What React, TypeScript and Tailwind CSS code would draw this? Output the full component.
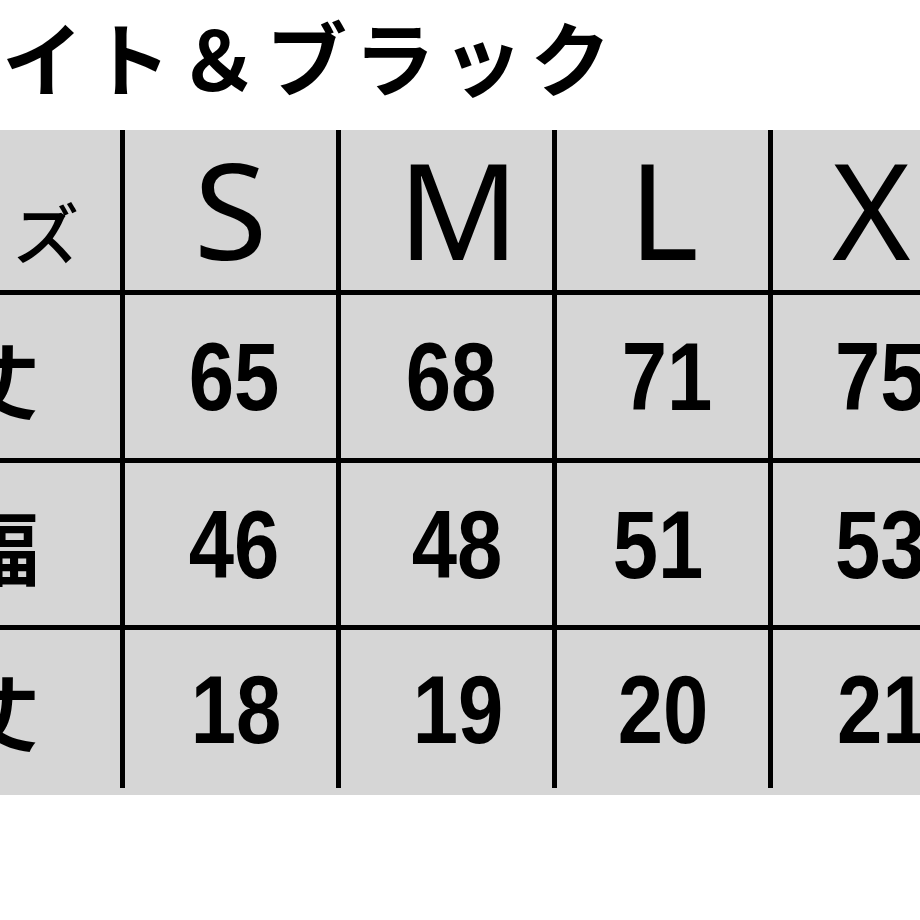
import React from 'react';

// 各セルの微調整（元画像の文字位置に合わせる）
const ROWS = [
  {
    label: '着丈',
    height: 'h-[163px]',
    cells: [
      { v: '65', pad: 'justify-center pl-[6px]' },
      { v: '68', pad: 'justify-center pl-[8px]' },
      { v: '71', pad: 'justify-center pl-[8px]' },
      { v: '75', pad: 'justify-start pl-[62px]' },
    ],
  },
  {
    label: '身幅',
    height: 'h-[162px]',
    cells: [
      { v: '46', pad: 'justify-center pl-[6px]' },
      { v: '48', pad: 'justify-center pl-[20px]' },
      { v: '51', pad: 'justify-center pr-[10px]' },
      { v: '53', pad: 'justify-start pl-[62px]' },
    ],
  },
  {
    label: '袖丈',
    height: 'h-[158px]',
    cells: [
      { v: '18', pad: 'justify-center pl-[10px]' },
      { v: '19', pad: 'justify-center pl-[22px]' },
      { v: '20', pad: 'justify-center' },
      { v: '21', pad: 'justify-start pl-[64px]' },
    ],
  },
];

const SIZES = [
  { s: 'S', pad: 'justify-center' },
  { s: 'M', pad: 'justify-center pl-[24px]' },
  { s: 'L', pad: 'justify-center pl-[2px]' },
  { s: 'XL', pad: 'justify-start pl-[59px]' },
];

export default function App() {
  return (
    <main className="w-[920px] h-[920px] bg-white overflow-hidden relative">
      {/* タイトル（左が切れている） */}
      <div className="h-[130px] flex items-start overflow-hidden">
        <h1 className="font-['Noto_Sans_CJK_JP',sans-serif] font-bold text-[81px] leading-none tracking-[7px] text-black whitespace-nowrap pt-[14px] pl-[2px]">
          イト＆ブラック
        </h1>
      </div>

      {/* サイズ表 */}
      <div className="bg-[#d6d6d6] pb-[7px] w-[920px] overflow-hidden">
        <div className="grid grid-cols-[120px_211px_211px_211px_147px] gap-[5px] bg-black">
          <div className="bg-[#d6d6d6] h-[160px] flex items-center justify-end pr-[41px] pt-[40px] overflow-hidden">
            <span className="font-['Noto_Sans_CJK_JP',sans-serif] font-medium text-[66px] leading-none whitespace-nowrap">
              <span className="mr-[60px]">サイ</span>ズ
            </span>
          </div>
          {SIZES.map((c) => (
            <div key={c.s} className={`bg-[#d6d6d6] h-[160px] flex items-center ${c.pad}`}>
              <span className="font-['Noto_Sans',sans-serif] font-normal text-[134px] leading-none whitespace-nowrap -mt-[4px]">{c.s}</span>
            </div>
          ))}

          {ROWS.map((row) => (
            <React.Fragment key={row.label}>
              <div className={`bg-[#d6d6d6] ${row.height} flex items-center justify-end pr-[81px] overflow-hidden`}>
                <span className="font-['Noto_Sans_CJK_JP',sans-serif] font-bold text-[80px] leading-none whitespace-nowrap">{row.label}</span>
              </div>
              {row.cells.map((c, i) => (
                <div key={i} className={`bg-[#d6d6d6] ${row.height} flex items-center ${c.pad}`}>
                  <span
                    className={`inline-block ${i < 3 ? 'origin-center' : 'origin-left'} scale-x-[0.84] font-['Liberation_Sans',sans-serif] font-bold text-[97px] leading-none whitespace-nowrap`}
                  >
                    {c.v}
                  </span>
                </div>
              ))}
            </React.Fragment>
          ))}
        </div>
      </div>
    </main>
  );
}
